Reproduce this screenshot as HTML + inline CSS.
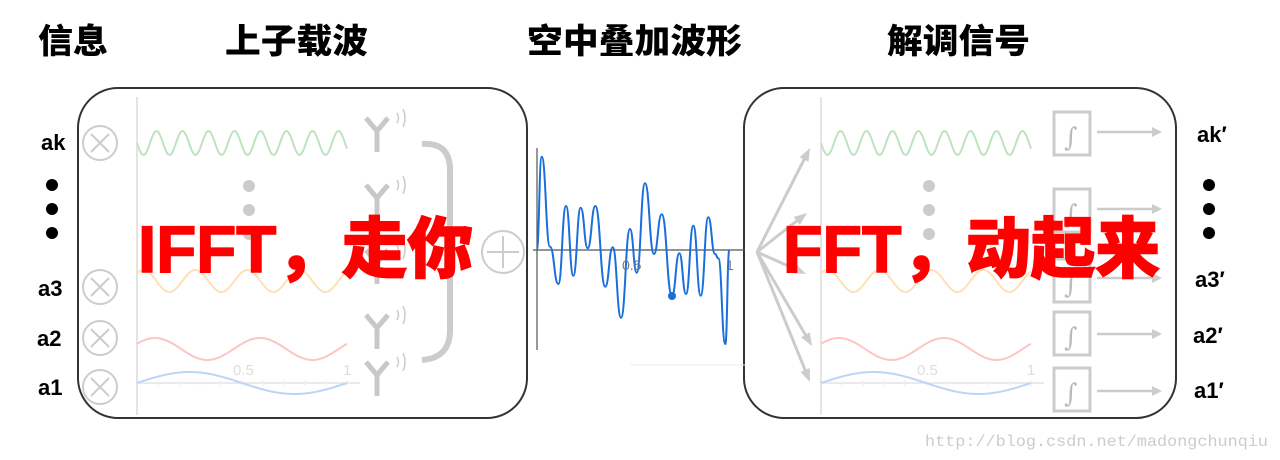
<!DOCTYPE html>
<html><head><meta charset="utf-8"><style>
html,body{margin:0;padding:0;background:#fff;width:1280px;height:460px;overflow:hidden}
svg{display:block}
.h{font-family:"Liberation Sans","Noto Sans CJK SC",sans-serif;font-weight:900;font-size:34px;fill:#000}
.l{font-family:"Liberation Sans",sans-serif;font-weight:bold;font-size:22px;fill:#000}
.big{font-family:"Liberation Sans","Noto Sans CJK SC",sans-serif;font-weight:900;font-size:66px;fill:#f00;stroke:#f00;stroke-width:1.5}
.t{font-family:"Liberation Sans",sans-serif;font-size:15px;fill:#ddd}
</style></head><body>
<svg id="s" width="1280" height="460" viewBox="0 0 1280 460">
<text class="h" x="38" y="53" textLength="70" lengthAdjust="spacingAndGlyphs">信息</text>
<text class="h" x="225" y="53" textLength="143" lengthAdjust="spacingAndGlyphs">上子载波</text>
<text class="h" x="527" y="53" textLength="215" lengthAdjust="spacingAndGlyphs">空中叠加波形</text>
<text class="h" x="887" y="53" textLength="143" lengthAdjust="spacingAndGlyphs">解调信号</text>

<rect x="78" y="88" width="449" height="330" rx="40" fill="none" stroke="#333" stroke-width="2"/>
<rect x="744" y="88" width="432" height="330" rx="40" fill="none" stroke="#333" stroke-width="2"/>

<g id="left"></g>
<g id="right"></g>

<text class="l" x="41" y="150">ak</text>
<circle cx="52" cy="185" r="6"/><circle cx="52" cy="209" r="6"/><circle cx="52" cy="233" r="6"/>
<text class="l" x="38" y="296">a3</text>
<text class="l" x="37" y="346">a2</text>
<text class="l" x="38" y="395">a1</text>
<g fill="none" stroke="#ccc" stroke-width="2">
<circle cx="100" cy="143" r="17"/><path d="M91 134L109 152M109 134L91 152"/>
<circle cx="100" cy="287" r="17"/><path d="M91 278L109 296M109 278L91 296"/>
<circle cx="100" cy="338" r="17"/><path d="M91 329L109 347M109 329L91 347"/>
<circle cx="100" cy="387" r="17"/><path d="M91 378L109 396M109 378L91 396"/>
<circle cx="503" cy="252" r="21"/><path d="M503 236V268M487 252H519"/>
<path d="M422 144Q450 142 450 170V330Q450 358 422 360" stroke-width="6"/>
</g>
<g fill="#ccc"><circle cx="249" cy="186" r="6"/><circle cx="249" cy="210" r="6"/><circle cx="249" cy="234" r="6"/>
<circle cx="929" cy="186" r="6"/><circle cx="929" cy="210" r="6"/><circle cx="929" cy="234" r="6"/></g>

<g stroke="#555" stroke-width="1.2" fill="none">
<path d="M537 148V350M533 250H745"/>
</g>
<path d="M630 365H745" stroke="#eee"/>
<path id="mid" fill="none" stroke="#1a6fdc" stroke-width="2"/>
<circle cx="672" cy="296" r="4" fill="#1a6fdc"/>
<text x="622" y="270" font-family="Liberation Sans" font-size="14" fill="#777">0.5</text>
<text x="726" y="270" font-family="Liberation Sans" font-size="14" fill="#777">1</text>

<text class="l" x="1197" y="142">ak′</text>
<circle cx="1209" cy="185" r="6"/><circle cx="1209" cy="209" r="6"/><circle cx="1209" cy="233" r="6"/>
<text class="l" x="1195" y="287">a3′</text>
<text class="l" x="1193" y="343">a2′</text>
<text class="l" x="1194" y="398">a1′</text>

<text class="big" x="138" y="272" textLength="335" lengthAdjust="spacingAndGlyphs">IFFT，走你</text>
<text class="big" x="783" y="272" textLength="377" lengthAdjust="spacingAndGlyphs">FFT，动起来</text>

<text x="925" y="446" font-family="Liberation Mono,monospace" font-size="16" fill="#ccc" textLength="343" lengthAdjust="spacingAndGlyphs">http://blog.csdn.net/madongchunqiu</text>
</svg>
<script>
var NS="http://www.w3.org/2000/svg";
function el(p,t,a){var e=document.createElementNS(NS,t);for(var k in a)e.setAttribute(k,a[k]);p.appendChild(e);return e;}
function wave(x0,x1,yc,A,per,phase){var d="";for(var x=x0;x<=x1;x+=1){var y=yc-A*Math.sin(2*Math.PI*(x-x0)/per+phase);d+=(x==x0?"M":"L")+x+" "+y.toFixed(1);}return d;}
function panel(g,ox){
 el(g,"path",{d:"M"+ox+" 97V415",stroke:"#e4e4e4","stroke-width":2,fill:"none"});
 el(g,"path",{d:"M"+ox+" 383H"+(ox+223),stroke:"#e4e4e4","stroke-width":1.5,fill:"none"});
 for(var i=1;i<=10;i++)el(g,"path",{d:"M"+(ox+i*21)+" 380V386",stroke:"#eee"});
 el(g,"path",{d:wave(ox,ox+210,143,12,26,Math.PI),stroke:"#bfe3bf","stroke-width":2,fill:"none"});
 el(g,"path",{d:wave(ox,ox+210,281,11,52,0.8),stroke:"#ffe0b3","stroke-width":2,fill:"none"});
 el(g,"path",{d:wave(ox,ox+210,349,11,105,0.5),stroke:"#ffc4c4","stroke-width":2,fill:"none"});
 el(g,"path",{d:wave(ox,ox+210,383,11,210,0),stroke:"#bcd5f5","stroke-width":2,fill:"none"});
 var t=el(g,"text",{x:ox+96,y:375,"class":"t"});t.textContent="0.5";
 t=el(g,"text",{x:ox+206,y:375,"class":"t"});t.textContent="1";
}
var L=document.getElementById("left"),R=document.getElementById("right");
panel(L,137);panel(R,821);
[118,185,250,315,362].forEach(function(y){
 el(L,"path",{d:"M366 "+y+"L377 "+(y+13)+"L388 "+y+"M377 "+(y+13)+"V"+(y+34),stroke:"#c8c8c8","stroke-width":5,fill:"none"});
 el(L,"path",{d:"M397 "+(y-5)+"q3 5 0 10M403 "+(y-9)+"q4 9 0 18",stroke:"#ccc","stroke-width":1.5,fill:"none"});
});
[[810,148],[807,213],[806,274],[812,346],[810,382]].forEach(function(p){
 var dx=p[0]-757,dy=p[1]-252,len=Math.sqrt(dx*dx+dy*dy),ux=dx/len,uy=dy/len;
 el(R,"path",{d:"M757 252L"+(p[0]-ux*6)+" "+(p[1]-uy*6),stroke:"#ccc","stroke-width":3,fill:"none"});
 var bx=p[0]-ux*13,by=p[1]-uy*13;
 el(R,"path",{d:"M"+p[0]+" "+p[1]+"L"+(bx-uy*5)+" "+(by+ux*5)+"L"+(bx+uy*5)+" "+(by-ux*5)+"Z",fill:"#ccc"});
});
[[112,132],[189,209],[259,278],[312,334],[368,391]].forEach(function(p){
 el(R,"rect",{x:1054,y:p[0],width:36,height:43,fill:"#fff","fill-opacity":0.6,stroke:"#ccc","stroke-width":3});
 var t=el(R,"text",{x:1064,y:p[0]+34,"font-family":"DejaVu Serif,serif","font-size":"26",fill:"#bbb"});t.textContent="∫";
 el(R,"path",{d:"M1097 "+p[1]+"H1158",stroke:"#ccc","stroke-width":2.5});
 el(R,"path",{d:"M1152 "+(p[1]-5)+"L1162 "+p[1]+"L1152 "+(p[1]+5)+"Z",fill:"#ccc"});
});
var pts=[[536.7,250],[541.7,156.7],[550,246.7],[558.3,284],[566,206],[573.3,275.7],[580.7,207.7],[587.7,248.3],[595.3,206],[605.3,286.7],[612.7,247.3],[621,317.7],[630,229],[636.7,272.7],[645,183.3],[654,254],[661.7,214.3],[672,295.7],[679.3,253.3],[686,294],[693.3,225.7],[700.7,295.7],[708.3,217.3],[715,254],[718.3,258.3],[725.3,344],[729.3,250]];
var d="M"+pts[0][0]+" "+pts[0][1];
for(var i=1;i<pts.length;i++){var a=pts[i-1],b=pts[i],m=(a[0]+b[0])/2;d+="C"+m+" "+a[1]+" "+m+" "+b[1]+" "+b[0]+" "+b[1];}
document.getElementById("mid").setAttribute("d",d);
</script>
</body></html>
